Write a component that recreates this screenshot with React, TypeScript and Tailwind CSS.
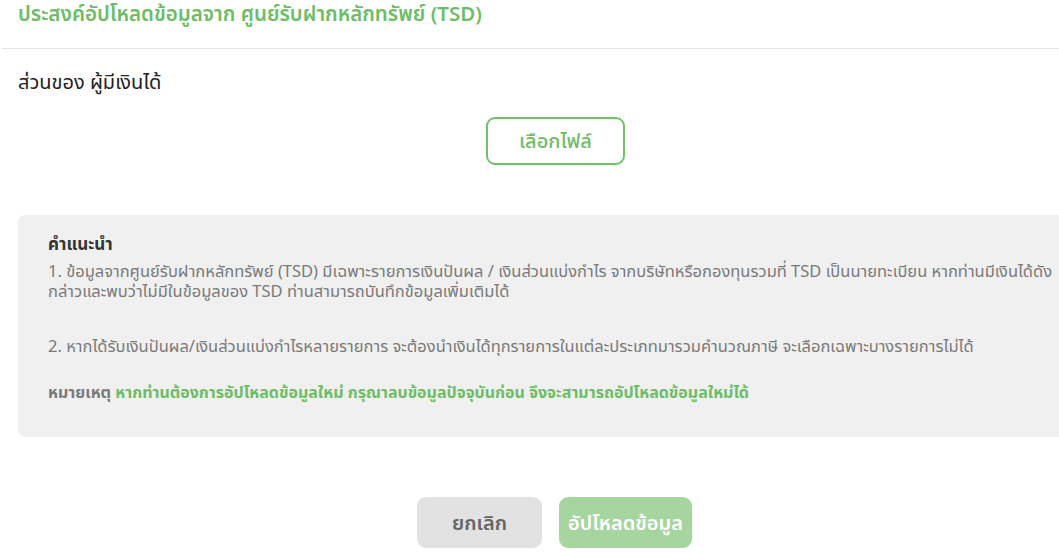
export default function App() {
  return (
    <div className="w-[1059px] h-[552px] overflow-hidden bg-white" style={{ fontFamily: '"Noto Sans", "Noto Sans Thai", sans-serif' }}>
      <div className="pl-[18px] h-[48px] text-[20.5px] leading-[26px] font-semibold text-[#6dbd66]">
        ประสงค์อัปโหลดข้อมูลจาก ศูนย์รับฝากหลักทรัพย์ (TSD)
      </div>
      <div className="ml-[2px] border-t border-[#e3e5ea]" />
      <div className="pl-[18px] pt-[18px] text-[20px] text-[#222] leading-[30px]">ส่วนของ ผู้มีเงินได้</div>
      <div className="flex justify-center pt-[20px]">
        <button className="w-[139px] h-[48px] ml-[52px] border-2 border-[#73c06a] rounded-[9px] text-[20px] font-medium text-[#6dbd66]">
          เลือกไฟล์
        </button>
      </div>
      <div className="ml-[18px] mt-[50px] w-[1060px] h-[222px] bg-[#f0f0f0] rounded-[8px] pl-[30px] pt-[17px] pr-[10px]">
        <div className="text-[17px] font-bold text-[#333] leading-[24px]">คำแนะนำ</div>
        <div className="mt-[5px] text-[16.5px] text-[#7a7a7a] leading-[20px] w-[1005px]">
          1. ข้อมูลจากศูนย์รับฝากหลักทรัพย์ (TSD) มีเฉพาะรายการเงินปันผล / เงินส่วนแบ่งกำไร จากบริษัทหรือกองทุนรวมที่ TSD เป็นนายทะเบียน หากท่านมีเงินได้ดังกล่าวและพบว่าไม่มีในข้อมูลของ TSD ท่านสามารถบันทึกข้อมูลเพิ่มเติมได้
        </div>
        <div className="mt-[35px] text-[16.5px] text-[#7a7a7a] leading-[20px]">
          2. หากได้รับเงินปันผล/เงินส่วนแบ่งกำไรหลายรายการ จะต้องนำเงินได้ทุกรายการในแต่ละประเภทมารวมคำนวณภาษี จะเลือกเฉพาะบางรายการไม่ได้
        </div>
        <div className="mt-[26px] text-[16px] font-bold leading-[20px] text-[#7a7a7a]">
          หมายเหตุ <span className="text-[#6dbd66]">หากท่านต้องการอัปโหลดข้อมูลใหม่ กรุณาลบข้อมูลปัจจุบันก่อน จึงจะสามารถอัปโหลดข้อมูลใหม่ได้</span>
        </div>
      </div>
      <div className="flex justify-center gap-[17px] pt-[60px] pl-[50px]">
        <button className="w-[125px] h-[51px] rounded-[9px] bg-[#e2e2e2] text-[20px] font-semibold text-[#666]">ยกเลิก</button>
        <button className="w-[133px] h-[51px] rounded-[9px] bg-[#a7d59f] text-[20px] font-semibold text-white">อัปโหลดข้อมูล</button>
      </div>
    </div>
  );
}
